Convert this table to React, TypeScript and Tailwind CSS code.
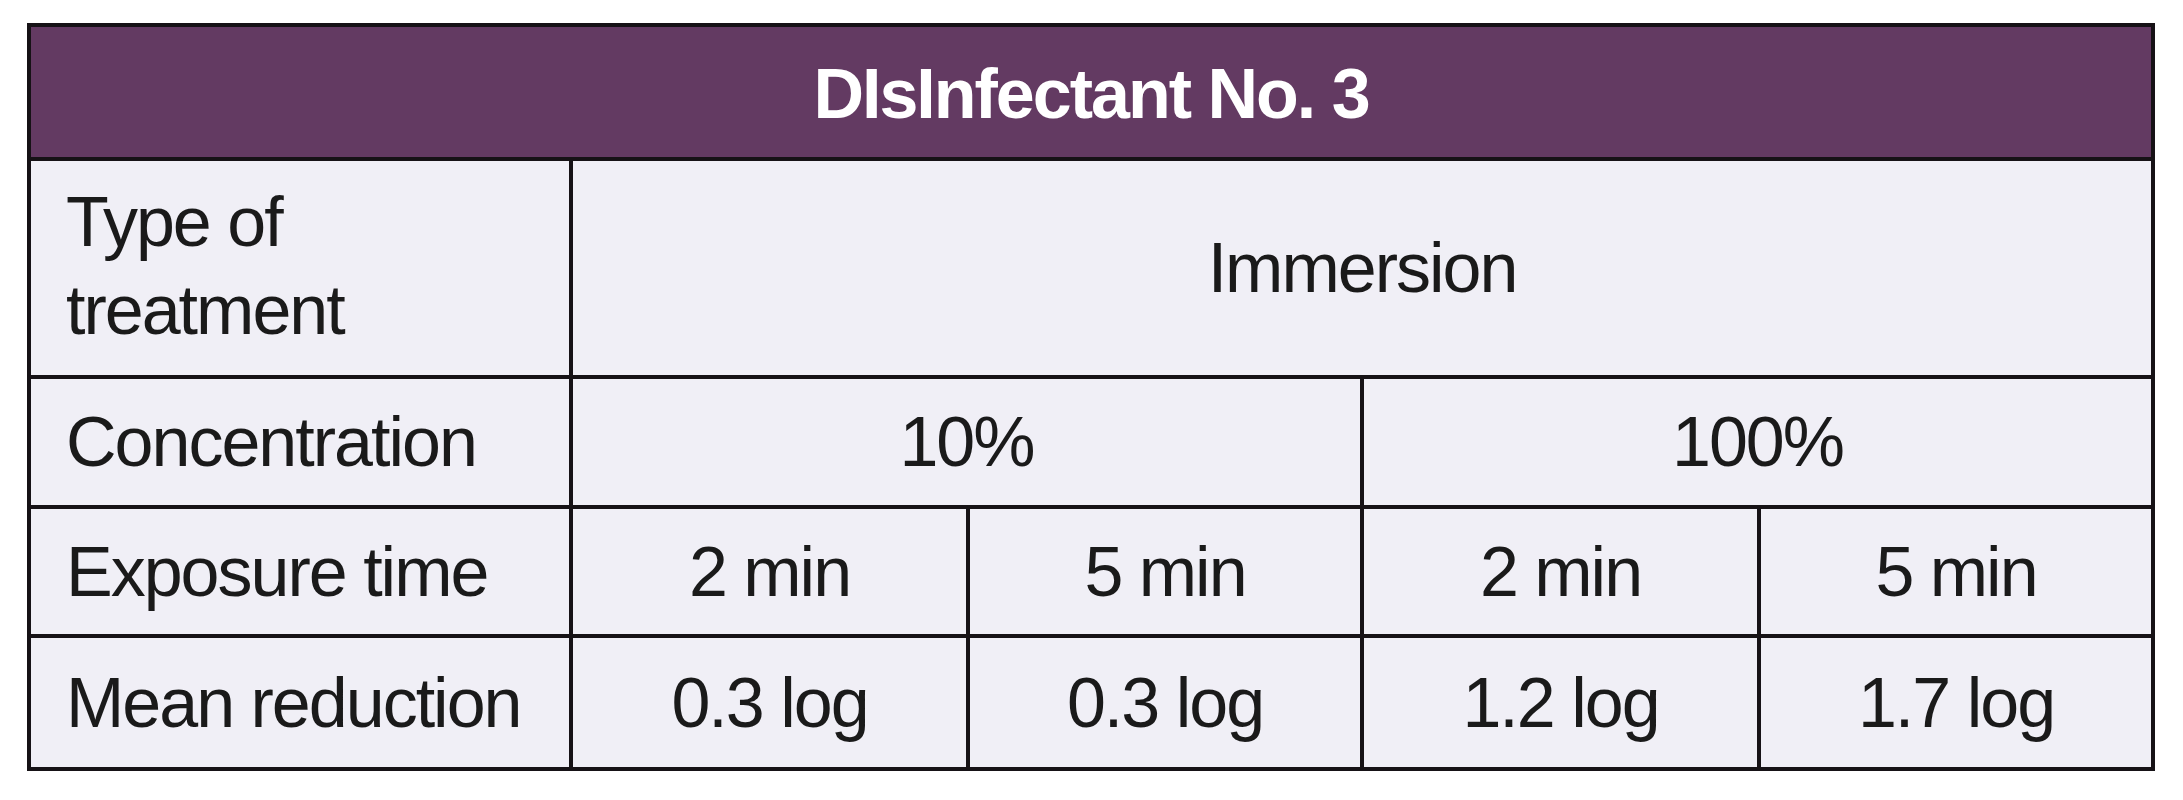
import React from "react";

const cell =
  "bg-[#f0eff6] flex items-center justify-center text-[#1a1a1a] text-[70px] leading-none tracking-[-2px]";
const labelCell =
  "bg-[#f0eff6] flex items-center justify-start pl-[35px] text-[#1a1a1a] text-[70px] leading-none tracking-[-2px]";

export default function App() {
  return (
    <div
      className="w-[2183px] h-[800px] bg-white pl-[27px] pt-[23px]"
      style={{ fontFamily: '"Liberation Sans", Arial, sans-serif' }}
    >
      <div className="w-[2128px] grid grid-cols-[538px_393px_390px_393px_390px] grid-rows-[130px_214px_126px_125px_129px] gap-[4px] p-[4px] bg-[#161216]">
        <div className="col-span-5 bg-[#633a62] flex items-center justify-center pt-[4px] text-white font-bold text-[70px] leading-none tracking-[-2px]">
          DIsInfectant No. 3
        </div>

        <div className={labelCell + " leading-[88px]"}>
          <div className="leading-[88px] -mt-[4px]">
            Type of
            <br />
            treatment
          </div>
        </div>
        <div className={cell + " col-span-4"}>Immersion</div>

        <div className={labelCell}>Concentration</div>
        <div className={cell + " col-span-2"}>10%</div>
        <div className={cell + " col-span-2"}>100%</div>

        <div className={labelCell}>Exposure time</div>
        <div className={cell}>2 min</div>
        <div className={cell}>5 min</div>
        <div className={cell}>2 min</div>
        <div className={cell}>5 min</div>

        <div className={labelCell}>Mean reduction</div>
        <div className={cell}>0.3 log</div>
        <div className={cell}>0.3 log</div>
        <div className={cell}>1.2 log</div>
        <div className={cell}>1.7 log</div>
      </div>
    </div>
  );
}
